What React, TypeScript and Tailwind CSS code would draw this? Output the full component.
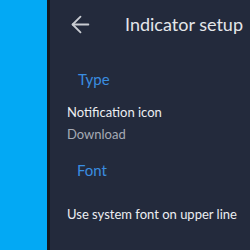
import { ArrowLeft } from "lucide-react"

export default function App() {
  return (
    <div className="flex h-[250px] w-[250px] overflow-hidden" style={{ fontFamily: "Lato, 'Open Sans', 'Liberation Sans', sans-serif" }}>
      <div className="w-[47px] shrink-0 bg-[#03a9f4]" />
      <div className="w-[3px] shrink-0 bg-[#14181f]" />
      <div className="flex-1 bg-[#232a3c]">
        <div className="flex h-[48px] items-center whitespace-nowrap pl-[17px]">
          <ArrowLeft className="h-[27px] w-[27px] text-[#c9ccd2]" strokeWidth={1.6} />
          <span className="ml-[31px] text-[18px] leading-[20px] text-[#e4e6ea]">Indicator setup</span>
        </div>
        <div className="mt-[21px] pl-[28px] text-[15px] leading-[20px] text-[#3a8de0]">Type</div>
        <div className="mt-[14px] pl-[17px] text-[13px] leading-[18px] text-[#eceef2]">Notification icon</div>
        <div className="mt-[4px] pl-[17px] text-[13px] leading-[18px] text-[#a6abb5]">Download</div>
        <div className="mt-[17px] pl-[27px] text-[15px] leading-[20px] text-[#3a8de0]">Font</div>
        <div className="mt-[25px] whitespace-nowrap pl-[17px] text-[13px] leading-[18px] text-[#eceef2]">Use system font on upper line</div>
      </div>
    </div>
  )
}
